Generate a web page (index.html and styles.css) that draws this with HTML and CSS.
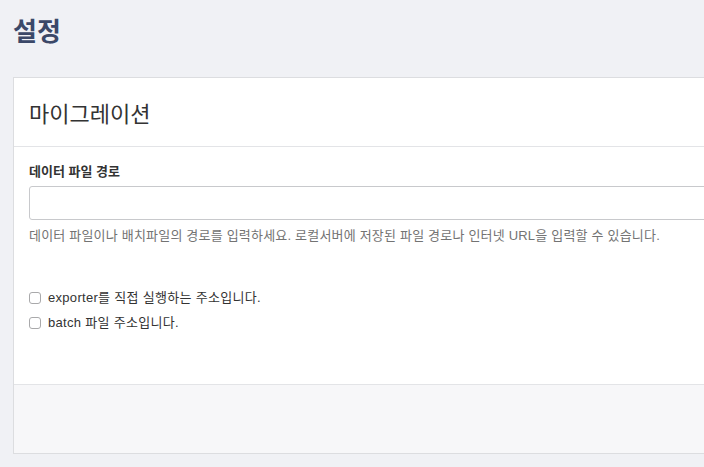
FILE: index.html
```html
<!DOCTYPE html>
<html lang="ko">
<head>
<meta charset="utf-8">
<link rel="stylesheet" href="styles.css">
</head>
<body>
<div class="page">
  <h1 class="title">설정</h1>
  <div class="card">
    <div class="card-header">마이그레이션</div>
    <div class="card-body">
      <label class="label" for="path">데이터 파일 경로</label>
      <input class="input" id="path" type="text">
      <p class="help">데이터 파일이나 배치파일의 경로를 입력하세요. 로컬서버에 저장된 파일 경로나 인터넷 URL을 입력할 수 있습니다.</p>
      <div class="checks">
        <label class="check"><input type="checkbox"><span>exporter를 직접 실행하는 주소입니다.</span></label>
        <label class="check"><input type="checkbox"><span>batch 파일 주소입니다.</span></label>
      </div>
    </div>
    <div class="card-footer"></div>
  </div>
</div>
</body>
</html>
```

FILE: styles.css
```css
html, body {
  margin: 0;
  padding: 0;
  background: #f0f1f5;
  overflow: hidden;
}
body {
  font-family: "Liberation Sans", "Noto Sans CJK KR", sans-serif;
  color: #333;
}
.page {
  padding: 0 0 0 13px;
  width: 760px;
}
.title {
  margin: 0;
  padding-top: 13px;
  height: 77px;
  box-sizing: border-box;
  font-size: 26px;
  line-height: 34px;
  font-weight: bold;
  color: #3b4868;
  font-family: "Noto Sans CJK KR", sans-serif;
}
.card {
  background: #fff;
  border: 1px solid #dcdde0;
}
.card-header {
  height: 69px;
  box-sizing: border-box;
  padding: 0 15px;
  display: flex;
  align-items: center;
  font-size: 22px;
  font-family: "Noto Sans CJK KR", sans-serif;
  color: #333;
  border-bottom: 1px solid #e3e4e7;
}
.card-body {
  padding: 14px 15px 0 15px;
  height: 237px;
  box-sizing: border-box;
}
.label {
  display: block;
  font-size: 13px;
  font-weight: bold;
  line-height: 20px;
  margin-bottom: 5px;
  font-family: "Noto Sans CJK KR", sans-serif;
}
.input {
  display: block;
  width: 100%;
  height: 34px;
  box-sizing: border-box;
  border: 1px solid #c8c9cc;
  border-radius: 3px;
  margin: 0;
  background: #fff;
}
.help {
  margin: 6px 0 0;
  font-size: 13px;
  line-height: 20px;
  color: #737373;
  letter-spacing: 0.2px;
}
.checks {
  margin-top: 42px;
  display: flex;
  flex-direction: column;
  gap: 5px;
}
.check {
  display: flex;
  align-items: center;
  font-size: 13px;
  line-height: 20px;
  color: #333;
  letter-spacing: 0.3px;
}
.check input {
  -webkit-appearance: none;
  appearance: none;
  box-sizing: border-box;
  margin: 0 7px 0 0;
  width: 12px;
  height: 12px;
  border: 1px solid #a9a9ab;
  border-radius: 3px;
  background: #fff;
}
.card-footer {
  height: 68px;
  background: #f7f7f9;
  border-top: 1px solid #e3e4e7;
}
```
